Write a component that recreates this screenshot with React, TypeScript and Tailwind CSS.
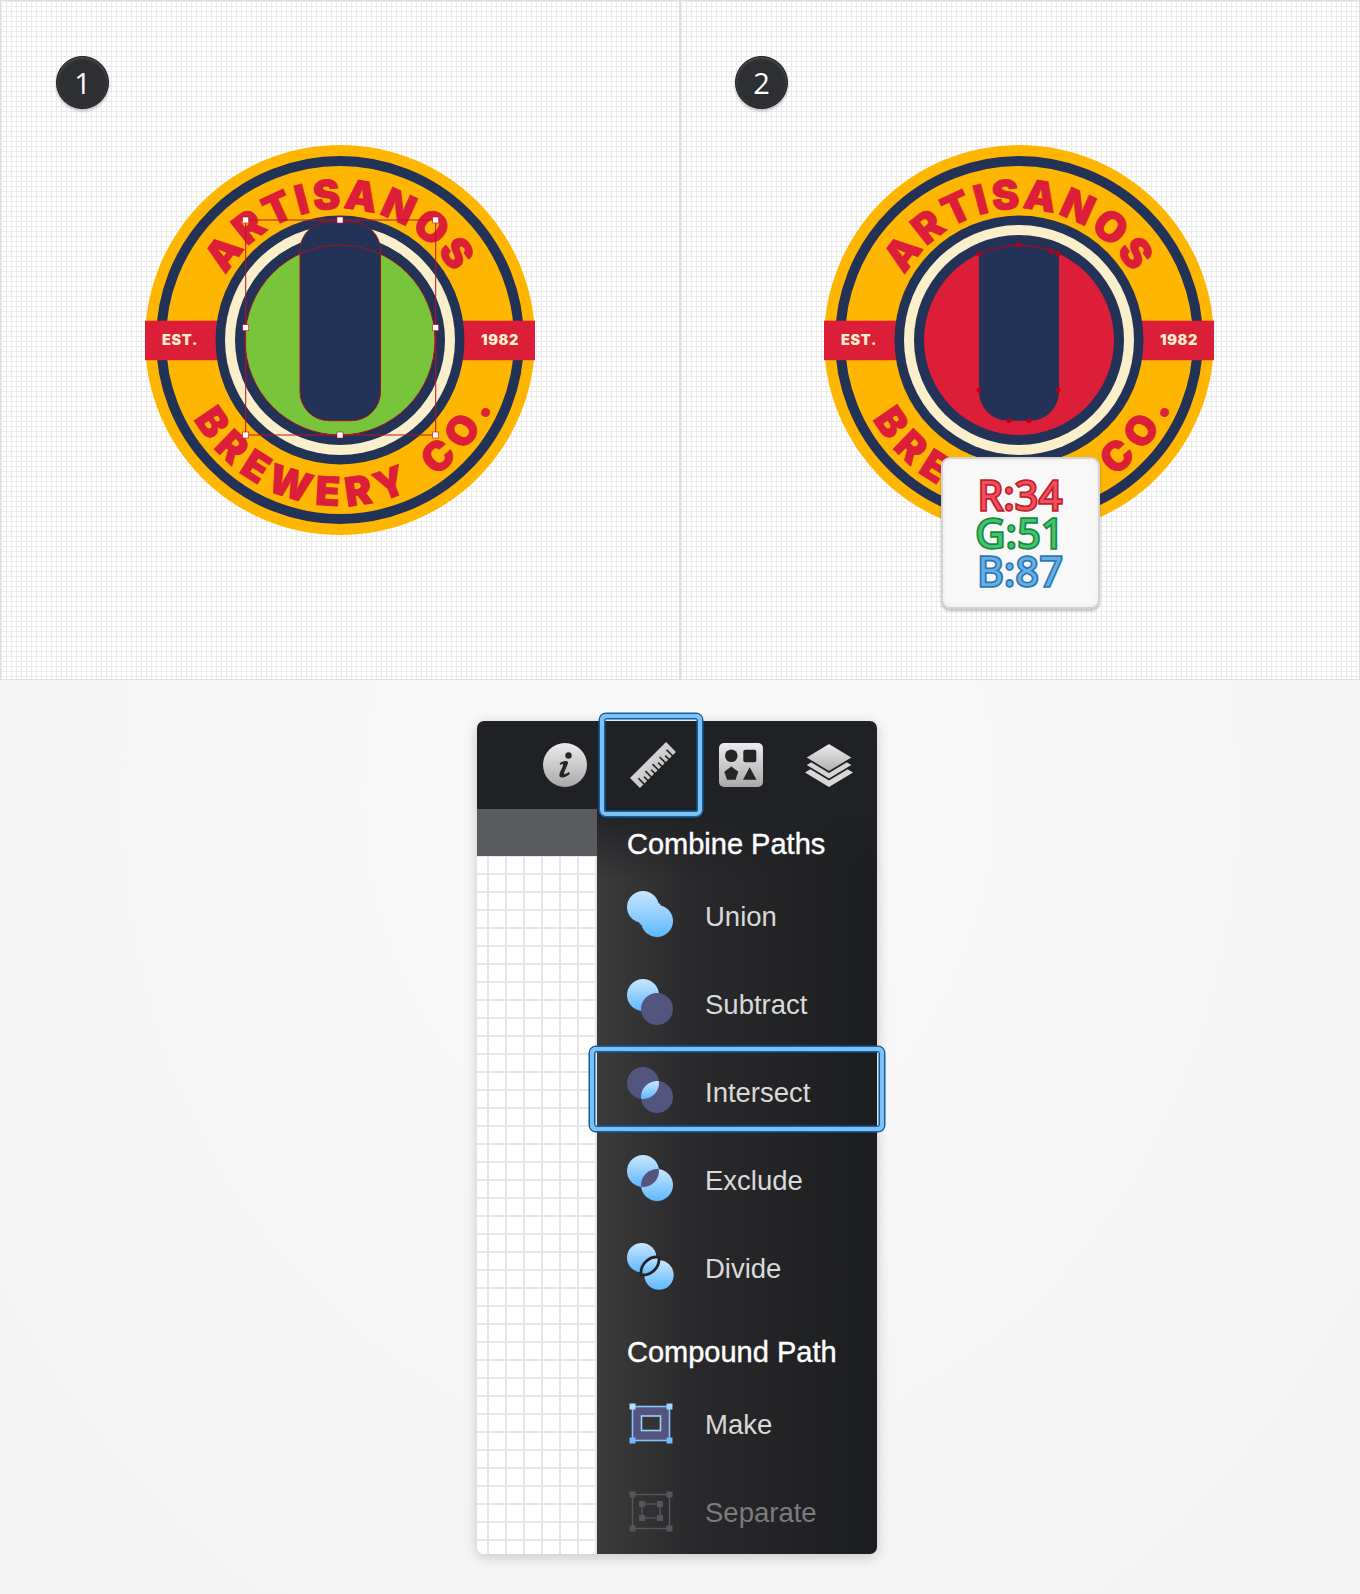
import React from "react";

const NAVY = "#233257";
const RED = "#dc1e38";
const BLUE = "#54557e";

function Logo({ edit }: { edit: boolean }) {
  const handles = [
    [105.7, 80],
    [200, 80],
    [295.7, 80],
    [105.7, 187.7],
    [295.7, 187.7],
    [105.7, 295],
    [200, 295],
    [295.7, 295],
  ];
  const anchors = [
    [160, 114],
    [199.5, 105],
    [232, 111],
    [239, 114],
    [160, 250],
    [239, 250],
    [190, 280.5],
    [210, 280.5],
  ];
  const id = edit ? "a" : "b";
  return (
    <svg width="400" height="400" viewBox="0 0 400 400">
      <defs>
        <path id={`top-${id}`} d="M 69 200 A 131 131 0 0 1 331 200" />
        <path id={`bottom-${id}`} d="M 34 200 A 166 166 0 0 0 366 200" />
        <clipPath id={`disc-${id}`}>
          <circle cx="200" cy="200" r="95" />
        </clipPath>
      </defs>
      <circle cx="200" cy="200" r="195" fill="#ffb600" />
      <circle cx="200" cy="200" r="179" fill="none" stroke={NAVY} strokeWidth="10" />
      <rect x="5" y="180.7" width="390" height="39.5" fill={RED} />
      <text className="font-['Inter',sans-serif] font-black" fontSize="41" fill={RED} stroke={RED} strokeWidth="0.8" letterSpacing="3">
        <textPath href={`#top-${id}`} startOffset="50%" textAnchor="middle">
          ARTISANOS
        </textPath>
      </text>
      <text className="font-['Inter',sans-serif] font-black" fontSize="40" fill={RED} stroke={RED} strokeWidth="0.8" letterSpacing="8" wordSpacing="6">
        <textPath href={`#bottom-${id}`} startOffset="52%" textAnchor="middle">
          BREWERY CO.
        </textPath>
      </text>
      <text x="40" y="205" textAnchor="middle" className="font-['Inter',sans-serif] font-black" fontSize="14.5" fill="#f9efca" letterSpacing="0.6">
        EST.
      </text>
      <text x="360" y="205" textAnchor="middle" className="font-['Inter',sans-serif] font-black" fontSize="14.5" fill="#f9efca" letterSpacing="0.6">
        1982
      </text>
      <circle cx="200" cy="200" r="124.5" fill={NAVY} />
      <circle cx="200" cy="200" r="115" fill="#f9efca" />
      <circle cx="200" cy="200" r="105" fill={NAVY} />

      {edit ? (
        <>
          <circle cx="200" cy="200" r="95" fill="#78c43a" />
          <rect x="160" y="81.7" width="80.5" height="199" rx="29" fill={NAVY} stroke="#a8101f" strokeWidth="1" />
          <circle cx="200" cy="200" r="95" fill="none" stroke="#a8101f" strokeWidth="1" />
          <rect x="105.7" y="80" width="190" height="215" fill="none" stroke="#c01020" strokeWidth="1" />
          {handles.map(([x, y]) => (
            <rect key={`${x}-${y}`} x={x - 3} y={y - 3} width="6" height="6" fill="#fff" stroke="#c01020" strokeWidth="0.6" />
          ))}
        </>
      ) : (
        <>
          <circle cx="200" cy="200" r="95" fill={RED} />
          <g clipPath={`url(#disc-${id})`}>
            <rect x="160" y="81.7" width="80" height="199" rx="29" fill={NAVY} />
          </g>
          <path d="M160 114 A95 95 0 0 1 239 114" fill="none" stroke="#b5001a" strokeWidth="1" />
          {anchors.map(([x, y]) => (
            <circle key={`${x}-${y}`} cx={x} cy={y} r="2.6" fill="#b5001a" />
          ))}
        </>
      )}
    </svg>
  );
}

function StepBadge({ n, className }: { n: number; className: string }) {
  return (
    <div className={`absolute top-[55px] flex h-[53px] w-[53px] items-center justify-center rounded-full border border-[#1b1c1f] bg-[#2e2f33] font-['Open_Sans',sans-serif] text-[29px] text-white shadow-[0_2px_3px_rgba(0,0,0,0.25),inset_0_1px_3px_rgba(255,255,255,0.2)] ${className}`}>
      {n}
    </div>
  );
}

function RgbBubble() {
  return (
    <div className="absolute left-[260px] top-[456px] flex h-[152px] w-[159px] flex-col items-center justify-center rounded-[9px] border-2 border-[#d3d3d3] bg-[#f8f8f8] font-['Open_Sans',sans-serif] text-[40px] leading-[38px] font-normal tracking-[1px] shadow-[0_2px_3px_rgba(0,0,0,0.25),inset_0_0_6px_rgba(0,0,0,0.05)] [paint-order:stroke_fill]">
      <div className="text-[#f0505c] [-webkit-text-stroke:3.5px_#c01f2c]">R:34</div>
      <div className="text-[#45c26f] [-webkit-text-stroke:3.5px_#178a40]">G:51</div>
      <div className="text-[#64aee4] [-webkit-text-stroke:3.5px_#2a77b4]">B:87</div>
    </div>
  );
}

const LENS = "M31.89 14.11 A16 16 0 0 1 14.11 31.89 A16 16 0 0 1 31.89 14.11 Z";

function PathIcon({ kind }: { kind: "union" | "subtract" | "intersect" | "exclude" | "divide" }) {
  const grad = `url(#${kind}-g)`;
  const first = kind === "intersect" ? BLUE : grad;
  const second = kind === "subtract" || kind === "intersect" ? BLUE : grad;
  const split = kind === "divide";
  const whole = kind === "union";
  return (
    <svg width="47" height="47" viewBox="0 0 47 47" className="mb-[4px] shrink-0">
      <defs>
        {whole ? (
          <linearGradient id="union-g" x1="0" y1="0" x2="0" y2="46" gradientUnits="userSpaceOnUse">
            <stop offset="0" stopColor="#c9e6ff" />
            <stop offset="1" stopColor="#5db8ff" />
          </linearGradient>
        ) : (
          <linearGradient id={`${kind}-g`} x1="0" y1="0" x2="0" y2="1">
            <stop offset="0" stopColor="#c9e6ff" />
            <stop offset="1" stopColor="#5db8ff" />
          </linearGradient>
        )}
      </defs>
      <circle cx={split ? 14.7 : 16} cy={split ? 14.7 : 16} r={split ? 14.7 : 16} fill={first} />
      <circle cx={split ? 32 : 30} cy={split ? 32 : 30} r={split ? 14.7 : 16} fill={second} />
      {whole && <path d={LENS} fill={grad} stroke={grad} strokeWidth="3" />}
      {kind === "intersect" && <path d={LENS} fill={grad} />}
      {kind === "exclude" && <path d={LENS} fill={BLUE} />}
      {split && <path d={LENS} fill={grad} stroke="#222326" strokeWidth="2.8" />}
    </svg>
  );
}

function MakeIcon() {
  const corners = [
    [0.5, 0.5, "#b8deff"],
    [37.5, 0.5, "#a4d4ff"],
    [0.5, 34.5, "#6dbcff"],
    [37.5, 34.5, "#6dbcff"],
  ] as const;
  return (
    <svg width="44" height="41" viewBox="0 0 44 41" className="mb-[2px] shrink-0">
      <rect x="3.5" y="3.5" width="37" height="34" fill={BLUE} stroke="#86c3f7" strokeWidth="1.6" />
      <rect x="12.5" y="13" width="19" height="14.5" fill="#333436" stroke="#9fd0f8" strokeWidth="1.6" />
      {corners.map(([x, y, c]) => (
        <rect key={`${x}-${y}`} x={x} y={y} width="6" height="6" fill={c} />
      ))}
    </svg>
  );
}

function SeparateIcon() {
  const outer = [
    [0.5, 0.5],
    [37.5, 0.5],
    [0.5, 34.5],
    [37.5, 34.5],
  ];
  const inner = [
    [10, 10],
    [28, 10],
    [10, 24],
    [28, 24],
  ];
  return (
    <svg width="44" height="41" viewBox="0 0 44 41" className="mb-[2px] shrink-0">
      <rect x="3.5" y="3.5" width="37" height="34" fill="none" stroke="#555659" strokeWidth="1.4" />
      <rect x="13" y="13" width="18" height="14" fill="none" stroke="#555659" strokeWidth="1.4" />
      {[...outer, ...inner].map(([x, y]) => (
        <rect key={`${x}-${y}`} x={x} y={y} width="6" height="6" fill="#555659" />
      ))}
    </svg>
  );
}

function InfoIcon() {
  return (
    <svg width="44" height="44" viewBox="0 0 44 44">
      <defs>
        <linearGradient id="tool-g" x1="0" y1="0" x2="0" y2="1">
          <stop offset="0" stopColor="#ececec" />
          <stop offset="1" stopColor="#a9a9a9" />
        </linearGradient>
      </defs>
      <circle cx="22" cy="22" r="22" fill="url(#tool-g)" />
      <circle cx="25.5" cy="12.5" r="3.2" fill="#242528" />
      <path d="M16.5 20.5 C19 18 24.5 17 25 19.5 C25.2 21.5 21.5 27 21 30.5 C21 32 23.5 31 25.5 29 L27 30.5 C24.5 34 18 36 16.5 33 C15.5 30.5 20 24.5 20 22 C20 20.5 18.5 21 17.5 22 Z" fill="#242528" />
    </svg>
  );
}

function RulerIcon() {
  const ticks = [5, 10, 15, 20, 25, 30, 35, 40, 45];
  return (
    <svg width="46" height="46" viewBox="0 0 46 46">
      <defs>
        <linearGradient id="ruler-g" x1="0" y1="0" x2="0" y2="46" gradientUnits="userSpaceOnUse">
          <stop offset="0" stopColor="#e6e6e6" />
          <stop offset="1" stopColor="#b4b4b4" />
        </linearGradient>
      </defs>
      <g transform="rotate(-45 23 23)">
        <rect x="-2.5" y="16" width="51" height="14" fill="url(#ruler-g)" />
        {ticks.map((t, i) => (
          <rect key={t} x={t - 2.5} y={i % 2 === 0 ? 22 : 25} width="1.6" height="9" fill="#202124" />
        ))}
      </g>
    </svg>
  );
}

function ShapesIcon() {
  return (
    <svg width="44" height="44" viewBox="0 0 44 44">
      <rect width="44" height="44" rx="5" fill="url(#tool-g)" />
      <circle cx="12.3" cy="12.7" r="6.3" fill="#242528" />
      <rect x="24.3" y="6.7" width="13" height="12.5" rx="2" fill="#242528" />
      <path d="M12.3 23.5 L19.3 28.7 L16.6 36.7 L8 36.7 L5.3 28.7 Z" fill="#242528" />
      <path d="M30.7 24.3 L37.5 36.7 L24 36.7 Z" fill="#242528" />
    </svg>
  );
}

function LayersIcon() {
  return (
    <svg width="48" height="44" viewBox="0 0 48 44" className="-ml-[1px]">
      <defs>
        <linearGradient id="layer-g" x1="0" y1="0" x2="0" y2="1">
          <stop offset="0" stopColor="#efefef" />
          <stop offset="1" stopColor="#b0b0b0" />
        </linearGradient>
      </defs>
      <path d="M24 15 L48 29.5 L24 44 L0 29.5 Z" fill="#d8d8d8" />
      <path d="M24 7.5 L48 22 L24 36.5 L0 22 Z" fill="#d4d4d4" stroke="#202124" strokeWidth="1.8" />
      <path d="M24 0 L48 14.5 L24 29 L0 14.5 Z" fill="url(#layer-g)" stroke="#202124" strokeWidth="1.8" />
    </svg>
  );
}

function Row({ icon, label, muted }: { icon: React.ReactNode; label: string; muted?: boolean }) {
  return (
    <div className="flex h-[88px] items-center">
      <div className="flex w-[47px] justify-center">{icon}</div>
      <span className={`ml-[31px] mt-[2px] text-[27.5px] ${muted ? "text-[#7b7b7e]" : "text-[#d9d9d9]"}`}>{label}</span>
    </div>
  );
}

function ToolPanel() {
  return (
    <div className="relative flex h-[833px] w-[400px] flex-col rounded-[7px] shadow-[0_3px_14px_rgba(0,0,0,0.2)]">
      <div className="flex h-[88px] shrink-0 items-center gap-[43px] rounded-t-[7px] bg-[#202124] pl-[66px]">
        <InfoIcon />
        <RulerIcon />
        <ShapesIcon />
        <LayersIcon />
      </div>
      <div className="flex min-h-0 flex-1 overflow-hidden rounded-b-[7px]">
        <div className="w-[120px] shrink-0 bg-white">
          <div className="h-[47px] bg-[#5a5b5f]" />
          <div className="h-full bg-[linear-gradient(to_right,#e6e6e6_2.5px,transparent_2.5px),linear-gradient(to_bottom,#e6e6e6_2.5px,transparent_2.5px)] bg-size-[18px_18px] bg-position-[10px_17px]" />
        </div>
        <div className="flex-1 bg-[linear-gradient(to_bottom,#202124,transparent_70px),linear-gradient(to_right,#3b3b3c,#29292b_35%,#1c1d20)] pl-[30px]">
          <div className="flex h-[63px] items-center pt-[9px] text-[29px] text-white [-webkit-text-stroke:0.4px_white]">Combine Paths</div>
          <Row icon={<PathIcon kind="union" />} label="Union" />
          <Row icon={<PathIcon kind="subtract" />} label="Subtract" />
          <Row icon={<PathIcon kind="intersect" />} label="Intersect" />
          <Row icon={<PathIcon kind="exclude" />} label="Exclude" />
          <Row icon={<PathIcon kind="divide" />} label="Divide" />
          <div className="flex h-[68px] items-center pt-[14px] text-[29px] text-white [-webkit-text-stroke:0.4px_white]">Compound Path</div>
          <Row icon={<MakeIcon />} label="Make" />
          <Row icon={<SeparateIcon />} label="Separate" muted />
        </div>
      </div>
      {/* blue highlights on top of the panel */}
      <div className="absolute left-[123px] top-[-7px] h-[102px] w-[102px] rounded-[6px] border-[4px] border-[#7cc0f8] shadow-[0_0_0_1.5px_#14609f,inset_0_0_0_1.5px_#14609f]" />
      <div className="absolute left-[113px] top-[326px] h-[84px] w-[294px] rounded-[6px] border-[4px] border-[#7cc0f8] shadow-[0_0_0_1.5px_#14609f,inset_0_0_0_1.5px_#14609f]" />
    </div>
  );
}

export default function App() {
  const grid =
    "relative flex items-center justify-center border border-[#dedede] bg-white bg-[linear-gradient(to_right,#ebebeb_1px,transparent_1px),linear-gradient(to_bottom,#ebebeb_1px,transparent_1px)] bg-size-[5px_5px]";
  return (
    <div className="h-[1594px] w-[1360px] overflow-hidden bg-[#f6f6f6] bg-[radial-gradient(ellipse_at_center,#fafafa,#f3f3f3)] font-['Liberation_Sans',Arial,sans-serif]">
      <div className="grid h-[680px] grid-cols-[680px_680px]">
        <div className={grid}>
          <StepBadge n={1} className="left-[55px]" />
          <Logo edit />
        </div>
        <div className={`${grid} pr-[2px]`}>
          <StepBadge n={2} className="left-[54px]" />
          <Logo edit={false} />
          <RgbBubble />
        </div>
      </div>
      <div className="flex justify-center pt-[41px]">
        <div className="mr-[6px]">
          <ToolPanel />
        </div>
      </div>
    </div>
  );
}
